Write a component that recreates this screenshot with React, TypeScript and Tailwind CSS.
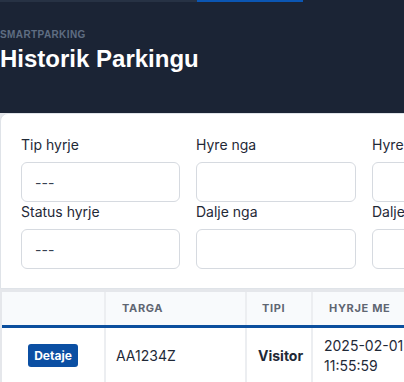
import React from "react";

const filters = [
  { label: "Tip hyrje", value: "---" },
  { label: "Hyre nga", value: "" },
  { label: "Hyre deri", value: "" },
  { label: "Status hyrje", value: "---" },
  { label: "Dalje nga", value: "" },
  { label: "Dalje deri", value: "" },
];

const App = () => {
  return (
    <div className="w-[404px] h-[382px] overflow-hidden bg-[#e5e7eb] font-['Inter',sans-serif] text-[#1f2937]">
      {/* header */}
      <header className="bg-[#1b2435] h-[113px]">
        <div className="flex h-[2px]">
          <div className="w-[197px] bg-[#273244]" />
          <div className="w-[106px] bg-[#0b56b3]" />
        </div>
        <div className="pt-[27px] font-['Liberation_Sans',Arial,sans-serif]">
          <p className="text-[10px] font-bold tracking-[0.04em] text-[#5f6d82] leading-[12px]">SMARTPARKING</p>
          <h1 className="mt-[4px] text-[24px] font-bold text-white leading-[28px]">Historik Parkingu</h1>
        </div>
      </header>

      {/* filters */}
      <section className="w-[600px] bg-white border border-[#dfe3e8] rounded-tl-lg pl-[20px] pt-[21px] pb-[19px]">
        <div className="grid grid-cols-[159px_160px_160px] gap-x-[16px]">
          {filters.map((f) => (
            <div key={f.label}>
              <label className="block text-[14px] leading-[20px] text-[#1f2937]">{f.label}</label>
              <div className="mt-[7px] h-[40px] rounded-md border border-[#d6dae0] bg-white flex items-center pl-[13px] text-[14px] text-[#374151]">
                {f.value}
              </div>
            </div>
          ))}
        </div>
      </section>

      {/* table */}
      <div className="mt-[3px] ml-[1px] w-[600px] bg-white border-l border-[#e5e7eb]">
        <table className="border-collapse text-left">
          <thead>
            <tr className="bg-[#f8fafc] border-b-[3px] border-[#0b4f9e] h-[34px]">
              <th className="w-[103px] border-r-2 border-[#eceef1]" />
              <th className="w-[141px] pl-[16px] border-r-2 border-[#eceef1] text-[11px] font-bold tracking-[0.06em] text-[#5f6672]">TARGA</th>
              <th className="w-[66px] pl-[15px] border-r-2 border-[#eceef1] text-[11px] font-bold tracking-[0.06em] text-[#5f6672]">TIPI</th>
              <th className="w-[140px] pl-[16px] text-[11px] font-bold tracking-[0.06em] text-[#5f6672]">HYRJE ME</th>
            </tr>
          </thead>
          <tbody>
            <tr className="text-[14px] leading-[20px] text-[#1f2937]">
              <td className="border-r-2 border-[#eceef1] py-[8px] text-center">
                <button className="bg-[#0b4fa3] text-white text-[12px] font-bold px-[6px] h-[23px] rounded-[3px]">Detaje</button>
              </td>
              <td className="pl-[10px] border-r-2 border-[#eceef1] py-[8px]">AA1234Z</td>
              <td className="pl-[11px] border-r-2 border-[#eceef1] py-[8px] font-bold">Visitor</td>
              <td className="pl-[11px] py-[8px]">2025-02-01<br />11:55:59</td>
            </tr>
          </tbody>
        </table>
      </div>
    </div>
  );
};

export default App;
